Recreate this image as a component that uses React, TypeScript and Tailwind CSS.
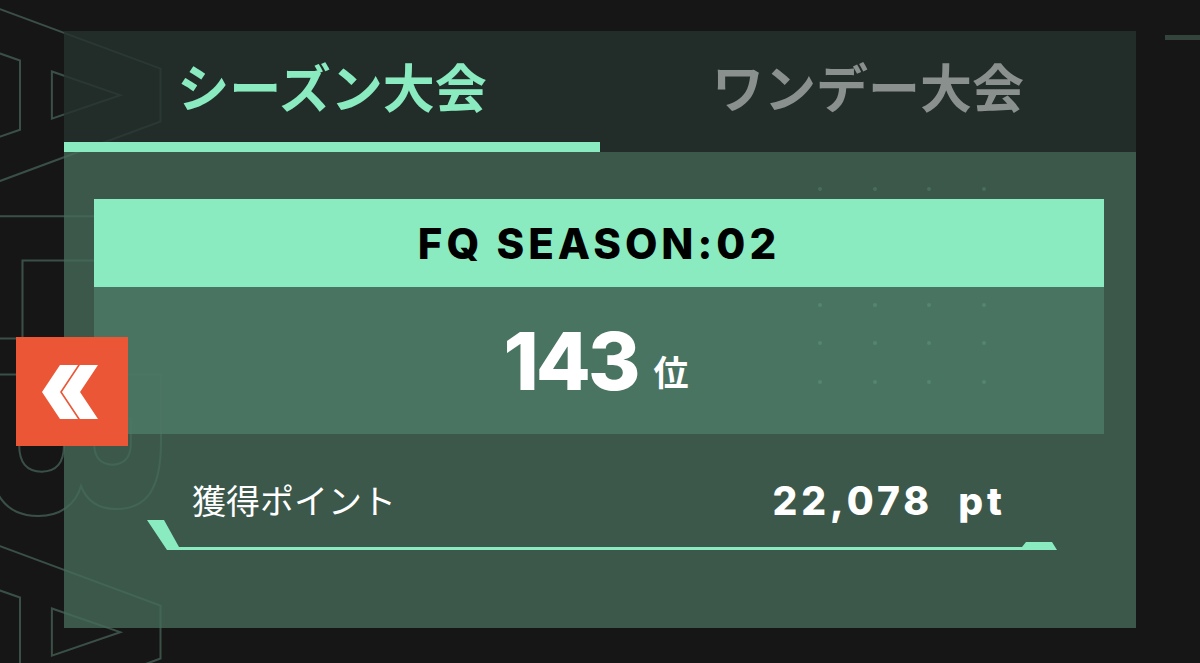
import React from 'react';

const latin = "font-['Inter','Noto_Sans_CJK_JP',sans-serif]";
const jp = "font-['Noto_Sans_CJK_JP','Noto_Sans',sans-serif]";

function DotGrid() {
  const cols = [0, 1, 2, 3];
  const rows = [0, 1, 2, 3, 4, 5];
  return (
    <div className="pointer-events-none absolute left-[754px] top-[35px] grid grid-cols-4 gap-x-[50.5px] gap-y-[34.5px]">
      {rows.map((r) =>
        cols.map((c) => <span key={`${r}-${c}`} className="block h-[4px] w-[4px] rounded-full bg-[#8aebc1]/15" />)
      )}
    </div>
  );
}

function PointsLine() {
  return (
    <svg width="920" height="40" viewBox="0 0 920 40" className="block">
      <polygon
        points="3,5 20,5 35,32 878,32 882,27 908,27 913,35 23,35"
        fill="#8aebc1"
      />
    </svg>
  );
}

function BackButton() {
  return (
    <button className="absolute left-[16px] top-[337px] z-20 flex h-[109px] w-[112px] items-center justify-center bg-[#eb5736]">
      <svg width="112" height="109" viewBox="0 0 112 109">
        <polygon points="44,28 62,28 44,55 62,82 44,82 26,55" fill="#fff" />
        <polygon points="64,28 82,28 64,55 82,82 64,82 46,55" fill="#fff" />
      </svg>
    </button>
  );
}

export default function App() {
  return (
    <div className="relative h-[663px] w-[1200px] overflow-hidden bg-[#161616]">
      {/* big outlined letters behind the panel */}
      <div
        className={`pointer-events-none absolute left-[-48px] top-[-92px] select-none text-[236px] font-bold leading-none text-transparent [writing-mode:vertical-rl] [-webkit-text-stroke:2px_#3a5047] font-['DejaVu_Sans',sans-serif] tracking-[8px]`}
      >
        IALBA
      </div>
      <div className="absolute right-0 top-[35px] h-[5px] w-[35px] bg-[#33443d]" />

      <div className="relative ml-[64px] mt-[31px] flex h-[597px] w-[1072px] flex-col">
        {/* tabs */}
        <div className="flex h-[121px] bg-[rgba(38,50,46,0.8)]">
          <button className="flex w-1/2 flex-col">
            <span className={`flex flex-1 items-center justify-center pb-[2px] text-[52px] font-bold text-[#8aebc1] ${jp}`}>
              シーズン大会
            </span>
            <span className="block h-[10px] w-full bg-[#8aebc1]" />
          </button>
          <button className="flex w-1/2 flex-col">
            <span className={`flex flex-1 items-center justify-center pb-[2px] text-[52px] font-bold text-[#8a908d] ${jp}`}>
              ワンデー大会
            </span>
            <span className="block h-[10px] w-full" />
          </button>
        </div>

        {/* body */}
        <div className="relative flex flex-1 flex-col bg-[rgba(70,107,90,0.78)] px-[30px] pt-[47px]">
          <DotGrid />
          <div className="flex w-[1010px] flex-col">
            <div className="relative z-10 flex h-[88px] items-center justify-center bg-[#8aebc1]">
              <span className={`text-[42px] font-extrabold tracking-[4px] text-black ${latin}`}>FQ SEASON:02</span>
            </div>
            <div className="flex h-[147px] items-center justify-center bg-[rgba(77,121,102,0.85)] pr-[6px]">
              <span className={`text-[80px] font-extrabold leading-none tracking-[-3px] text-white ${latin}`}>143</span>
              <span className={`ml-[16px] mt-[22px] text-[35px] font-bold text-white ${jp}`}>位</span>
            </div>
          </div>

          <div className="ml-[50px] mt-[47px] flex w-[920px] flex-col">
            <div className="flex items-end justify-between pl-[48px] pr-[58px]">
              <span className={`text-[34px] leading-none text-white ${jp}`}>獲得ポイント</span>
              <span className={`mb-[-3px] text-[39px] font-extrabold leading-none tracking-[4px] text-white ${latin}`}>
                22,078&nbsp;&nbsp;pt
              </span>
            </div>
            <div className="mt-[-2px]">
              <PointsLine />
            </div>
          </div>
        </div>
      </div>

      <BackButton />
    </div>
  );
}
